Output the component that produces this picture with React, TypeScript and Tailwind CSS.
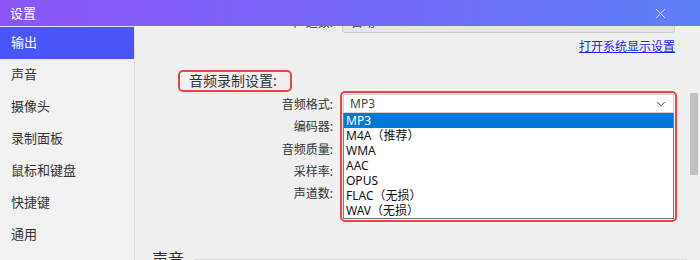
import { ChevronDown, X } from 'lucide-react';

const font = { fontFamily: '"Noto Sans", "Noto Sans CJK SC", sans-serif' };

const navItems = ['输出', '声音', '摄像头', '录制面板', '鼠标和键盘', '快捷键', '通用'];
const formLabels = ['音频格式:', '编码器:', '音频质量:', '采样率:', '声道数:'];
const formats = ['MP3', 'M4A（推荐）', 'WMA', 'AAC', 'OPUS', 'FLAC（无损）', 'WAV（无损）'];

export default function App() {
  return (
    <div
      className="w-[700px] h-[260px] overflow-hidden flex flex-col bg-[#f0f0f0] text-[#333]"
      style={font}
    >
      {/* Title bar */}
      <header className="h-[26px] shrink-0 flex items-center justify-between pl-[10px] pr-[31px] bg-gradient-to-r from-[#8b55f4] via-[#7466f6] to-[#5c80f8] text-white">
        <span className="text-[13px] leading-none">设置</span>
        <X className="size-[17px]" strokeWidth={1.1} />
      </header>

      <div className="flex flex-1 overflow-hidden">
        {/* Sidebar */}
        <nav className="w-[135px] shrink-0 border-t border-[#dfe0ff] border-r border-r-[#e2e2e2] bg-[#f2f2f2] flex flex-col">
          {navItems.map((item, i) => (
            <div
              key={item}
              className={
                i === 0
                  ? 'h-[32px] flex items-center pl-[11px] text-[13px] bg-[#4a56f9] text-white'
                  : 'h-[32px] flex items-center pl-[11px] text-[13px] text-[#333]'
              }
            >
              {item}
            </div>
          ))}
        </nav>

        {/* Main content */}
        <main className="flex-1 flex overflow-hidden">
          <div className="w-[552px] shrink-0 flex flex-col">
            {/* clipped row from above */}
            <div className="-mt-[14px] flex items-center h-[21px]">
              <span className="w-[198px] text-right text-[12px] leading-[16px]">声道数:</span>
              <div className="ml-[9px] w-[333px] h-[21px] bg-[#e6e6e6] border border-[#cfcfcf] rounded-[3px] flex items-center justify-between px-[8px]">
                <span className="text-[12px] leading-[16px] text-[#444]">自动</span>
                <ChevronDown className="size-[8px] text-[#444]" strokeWidth={2.5} />
              </div>
            </div>

            <div className="flex justify-end pr-[12px] mt-[6px]">
              <span className="text-[12px] text-[#2525ee] underline leading-[16px]">打开系统显示设置</span>
            </div>

            {/* Section heading */}
            <div className="ml-[43px] mt-[15px] w-[114px] h-[27px] border-2 border-[#ec4545] rounded-[5px] flex items-center pl-[9px]">
              <span className="text-[14px] leading-[18px] text-[#333]">音频录制设置:</span>
            </div>

            {/* Form */}
            <div className="flex -mt-px">
              <div className="w-[198px] shrink-0 flex flex-col items-end pt-[3px]">
                {formLabels.map((l) => (
                  <div key={l} className="h-[22.25px] flex items-center text-[12px] leading-[16px] text-[#333]">
                    {l}
                  </div>
                ))}
              </div>
              <div className="ml-[7px] w-[337px] border-2 border-[#ec4545] rounded-[5px] p-px">
                <div className="h-[19px] bg-white border border-[#d4d4d4] flex items-center justify-between pl-[6px] pr-[5px]">
                  <span className="text-[12px] leading-[15px] text-[#444]">MP3</span>
                  <ChevronDown className="size-[14px] text-[#333]" strokeWidth={1.6} />
                </div>
                <div className="bg-white border border-[#7a7a7a] border-t-0">
                  {formats.map((f, i) => (
                    <div
                      key={f}
                      className={
                        i === 0
                          ? 'h-[15px] flex items-center pl-[2px] text-[12px] leading-[15px] bg-[#0078d7] text-white'
                          : 'h-[15px] flex items-center pl-[2px] text-[12px] leading-[15px] text-[#111]'
                      }
                    >
                      {f}
                    </div>
                  ))}
                </div>
              </div>
            </div>

            {/* Next section */}
            <div className="mt-[27px] ml-[17px] flex items-center gap-[10px]">
              <span className="text-[16px] leading-[20px] text-[#333]">声音</span>
              <div className="flex-1 h-px bg-[#dcdcdc]" />
            </div>
          </div>

          {/* Scrollbar */}
          <div className="flex-1 pl-[3px]">
            <div className="mt-[67px] w-[8px] h-[82px] bg-[#c2c2c2]" />
          </div>
        </main>
      </div>
    </div>
  );
}
